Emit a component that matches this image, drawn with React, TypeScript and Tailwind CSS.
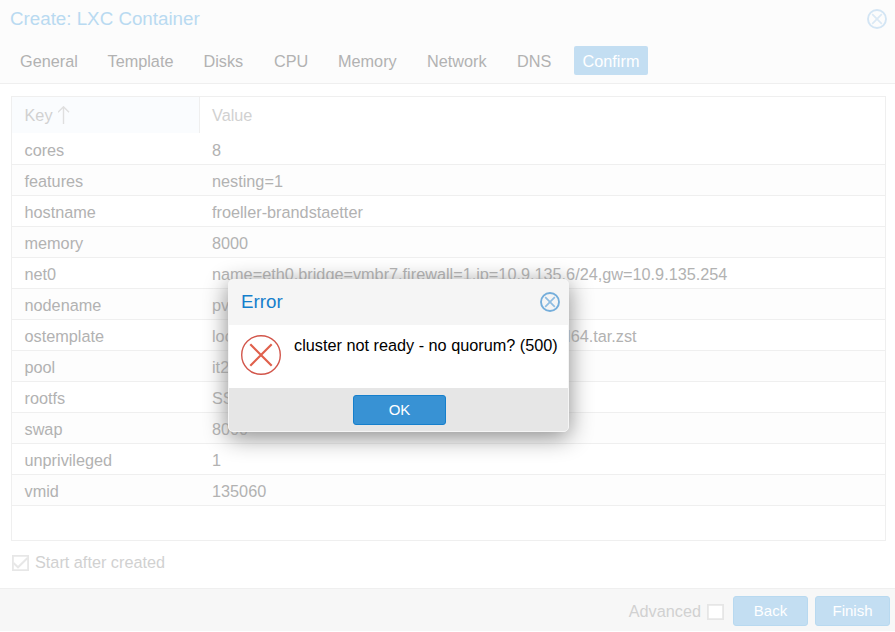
const tabs = [
  { label: "General", width: "w-[87.5px]" },
  { label: "Template", width: "w-24" },
  { label: "Disks", width: "w-[70.5px]" },
  { label: "CPU", width: "w-16" },
  { label: "Memory", width: "w-[89px]" },
  { label: "Network", width: "w-[90px]" },
  { label: "DNS", width: "w-14" },
];

const rows = [
  ["cores", "8"],
  ["features", "nesting=1"],
  ["hostname", "froeller-brandstaetter"],
  ["memory", "8000"],
  ["net0", "name=eth0,bridge=vmbr7,firewall=1,ip=10.9.135.6/24,gw=10.9.135.254"],
  ["nodename", "pve"],
  ["ostemplate", "local:vztmpl/ubuntu-22.04-standard_22.04-1_amd64.tar.zst"],
  ["pool", "it2"],
  ["rootfs", "SSD"],
  ["swap", "8000"],
  ["unprivileged", "1"],
  ["vmid", "135060"],
];

function CloseIcon({ faded = false }: { faded?: boolean }) {
  return (
    <svg className="block size-5" viewBox="0 0 20 20" fill="none">
      <circle cx="10" cy="10" r="9" stroke={faded ? "#d3e5f4" : "#75aedb"} strokeWidth="1.9" />
      <path d="M5.2 5.2 14.8 14.8M14.8 5.2 5.2 14.8" stroke={faded ? "#dbe9f5" : "#8fbde2"} strokeWidth="1.7" />
    </svg>
  );
}

function ErrorIcon() {
  return (
    <svg className="block size-10" viewBox="0 0 40 40" fill="none">
      <circle cx="20" cy="20" r="19.3" stroke="#d2564b" strokeWidth="1.4" />
      <path d="M9.3 9.3 30.7 30.7M30.7 9.3 9.3 30.7" stroke="#e0604c" strokeWidth="2.2" />
    </svg>
  );
}

function WizardButton({ label }: { label: string }) {
  return (
    <button className="h-[30px] w-[75px] rounded-[3px] border border-[#b8d9f0] bg-[#c3def2] text-[15px] leading-7 text-white">
      {label}
    </button>
  );
}

function ErrorDialog() {
  return (
    <div
      role="alertdialog"
      className="absolute left-[228px] top-[279px] flex h-[153px] w-[341px] flex-col overflow-hidden rounded-[5px] border border-[#f5f5f5] bg-white shadow-[0_5px_23px_#888888]"
    >
      <div className="flex h-[45px] items-center justify-between bg-[#f5f5f5] pb-[2px] pl-3 pr-2">
        <h2 className="text-[18.75px] leading-6 text-[#157fcc]">Error</h2>
        <CloseIcon />
      </div>
      <div className="flex h-[63px] gap-[13px] pl-3 pt-2.5">
        <ErrorIcon />
        <p className="text-[16.25px] leading-5 whitespace-nowrap text-black">cluster not ready - no quorum? (500)</p>
      </div>
      <div className="flex h-[43px] bg-[#e6e6e6] pl-[124px] pt-[7px]">
        <button className="h-[30px] w-[93px] rounded-[3px] border border-[#157fcc] bg-[#3892d4] text-[15px] leading-7 text-white">
          OK
        </button>
      </div>
    </div>
  );
}

export default function App() {
  return (
    <div className="relative flex h-[632px] w-[895px] flex-col overflow-hidden bg-white font-['Liberation_Sans',Arial,sans-serif] text-[16.25px] leading-5 text-[#b2b2b2]">
      <header className="h-[84px] border-b border-[#efefef] bg-[#fcfcfc]">
        <div className="flex h-[38px] items-center justify-between pl-2.5 pr-2">
          <h1 className="text-[18.75px] leading-6 text-[#b9daf1]">Create: LXC Container</h1>
          <CloseIcon faded />
        </div>
        <nav className="flex pl-5 pt-2">
          {tabs.map((tab) => (
            <span key={tab.label} className={`${tab.width} pt-[5px]`}>
              {tab.label}
            </span>
          ))}
          <span className="ml-px h-[29px] w-[74px] rounded-[2px] bg-[#c3def2] pt-[5px] text-center text-white">
            Confirm
          </span>
        </nav>
      </header>

      <main className="h-[504px] pl-[11px] pt-3">
        <div className="h-[445px] w-[875px] border border-[#efefef]">
          <div className="mb-px flex h-9 text-[#d1d1d1]">
            <div className="flex w-[188px] items-center border-r border-[#efefef] bg-[#fafcfe] pl-3">
              <span className="pl-[0.5px]">Key</span>
              <svg className="ml-[5px] h-[18px] w-3" viewBox="0 0 12 18" fill="none" stroke="#dfdfdf" strokeWidth="1.4">
                <path d="M5.5 .8V18M0 6.2 5.5 .8l5.5 5.4" />
              </svg>
            </div>
            <span className="flex items-center pl-3">Value</span>
          </div>
          {rows.map(([key, value], index) => (
            <div
              key={key}
              className={`flex h-[31px] items-center border-b border-[#efefef] pt-px pl-[12.5px] ${index % 2 ? "bg-[#fdfdfd]" : "bg-white"}`}
            >
              <span className="w-[187.5px]">{key}</span>
              <span className="whitespace-nowrap">{value}</span>
            </div>
          ))}
        </div>
        <label className="mt-3 flex h-5 text-[#d1d1d1]">
          <svg className="ml-px mr-1.5 mt-[2px] h-4 w-[17px]" viewBox="0 0 17 16" fill="none" stroke="#e7e7e7">
            <path d="M.9.9h15.2v14.2H.9z" strokeWidth="1.8" />
            <path d="M1.5 8 6 12.3 15.5 3" strokeWidth="2" />
          </svg>
          <span className="-mt-px">Start after created</span>
        </label>
      </main>

      <footer className="flex h-[43px] items-start justify-end border-t border-[#efefef] bg-[#f7f7f7] pr-[5px] pt-[7px]">
        <label className="flex h-[30px] items-center text-[#d1d1d1]">
          Advanced
          <svg className="ml-1.5 mr-[9px] mt-[2px] h-4 w-[17px]" viewBox="0 0 17 16">
            <path d="M.9.9h15.2v14.2H.9z" fill="#fff" stroke="#e6e6e6" strokeWidth="1.8" />
          </svg>
        </label>
        <div className="flex gap-[7px]">
          <WizardButton label="Back" />
          <WizardButton label="Finish" />
        </div>
      </footer>
      <ErrorDialog />
    </div>
  );
}
